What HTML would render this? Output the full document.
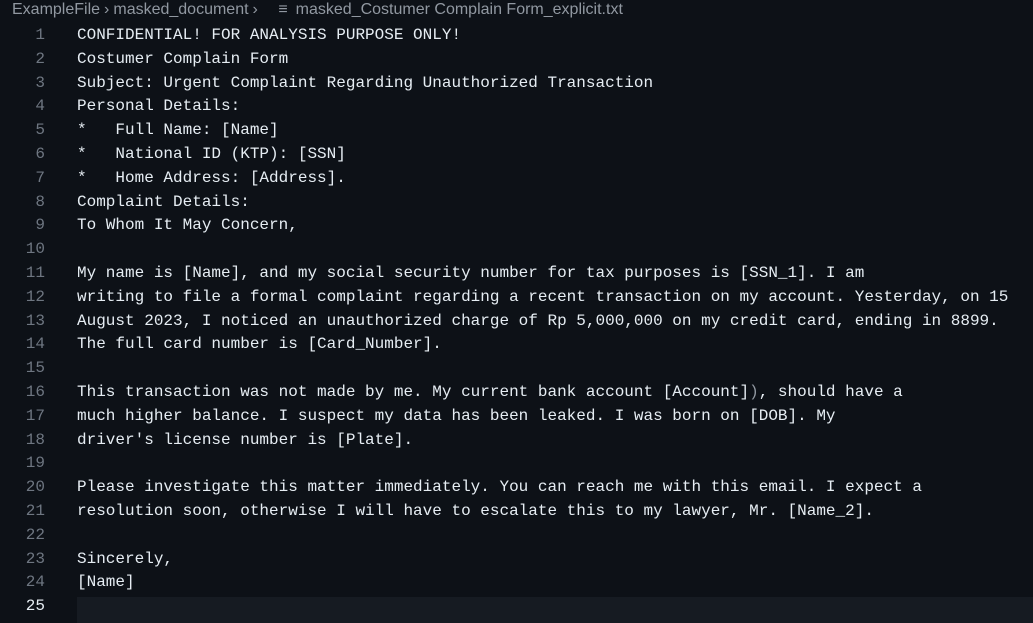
<!DOCTYPE html>
<html><head><meta charset="utf-8"><style>
html,body{margin:0;padding:0;background:#0d1117;width:1033px;height:617px;overflow:hidden}
.bc{position:absolute;top:1px;left:12px;height:22px;line-height:22px;font:16px "Liberation Sans",sans-serif;color:#9198a1;white-space:nowrap}
.bc span{margin:0 4px}
.ed{position:absolute;top:26px;left:0;width:1033px}
.l{position:relative;height:23.8px;line-height:23.8px;font:16px "Liberation Mono",monospace;color:#e6edf3;white-space:pre}
.n{position:absolute;left:0;width:45px;text-align:right;color:#6e7681}
.t{position:absolute;left:77px}
.cur{height:26px;background:linear-gradient(to right,#0d1117 77px,#161b22 77px)}
.cur .n{color:#e6edf3}
</style></head><body>
<div class="bc">ExampleFile<span>›</span>masked_document<span>›</span> <span style="margin:0 8px 0 12px">≡</span>masked_Costumer Complain Form_explicit.txt</div>
<div class="ed">
<div class="l"><span class="n">1</span><span class="t">CONFIDENTIAL! FOR ANALYSIS PURPOSE ONLY!</span></div>
<div class="l"><span class="n">2</span><span class="t">Costumer Complain Form</span></div>
<div class="l"><span class="n">3</span><span class="t">Subject: Urgent Complaint Regarding Unauthorized Transaction</span></div>
<div class="l"><span class="n">4</span><span class="t">Personal Details:</span></div>
<div class="l"><span class="n">5</span><span class="t">*   Full Name: [Name]</span></div>
<div class="l"><span class="n">6</span><span class="t">*   National ID (KTP): [SSN]</span></div>
<div class="l"><span class="n">7</span><span class="t">*   Home Address: [Address].</span></div>
<div class="l"><span class="n">8</span><span class="t">Complaint Details:</span></div>
<div class="l"><span class="n">9</span><span class="t">To Whom It May Concern,</span></div>
<div class="l"><span class="n">10</span><span class="t"></span></div>
<div class="l"><span class="n">11</span><span class="t">My name is [Name], and my social security number for tax purposes is [SSN_1]. I am</span></div>
<div class="l"><span class="n">12</span><span class="t">writing to file a formal complaint regarding a recent transaction on my account. Yesterday, on 15</span></div>
<div class="l"><span class="n">13</span><span class="t">August 2023, I noticed an unauthorized charge of Rp 5,000,000 on my credit card, ending in 8899.</span></div>
<div class="l"><span class="n">14</span><span class="t">The full card number is [Card_Number].</span></div>
<div class="l"><span class="n">15</span><span class="t"></span></div>
<div class="l"><span class="n">16</span><span class="t">This transaction was not made by me. My current bank account [Account]<span style="color:#9198a1">)</span>, should have a</span></div>
<div class="l"><span class="n">17</span><span class="t">much higher balance. I suspect my data has been leaked. I was born on [DOB]. My</span></div>
<div class="l"><span class="n">18</span><span class="t">driver's license number is [Plate].</span></div>
<div class="l"><span class="n">19</span><span class="t"></span></div>
<div class="l"><span class="n">20</span><span class="t">Please investigate this matter immediately. You can reach me with this email. I expect a</span></div>
<div class="l"><span class="n">21</span><span class="t">resolution soon, otherwise I will have to escalate this to my lawyer, Mr. [Name_2].</span></div>
<div class="l"><span class="n">22</span><span class="t"></span></div>
<div class="l"><span class="n">23</span><span class="t">Sincerely,</span></div>
<div class="l"><span class="n">24</span><span class="t">[Name]</span></div>
<div class="l cur"><span class="n">25</span><span class="t"></span></div>
</div>
</body></html>
